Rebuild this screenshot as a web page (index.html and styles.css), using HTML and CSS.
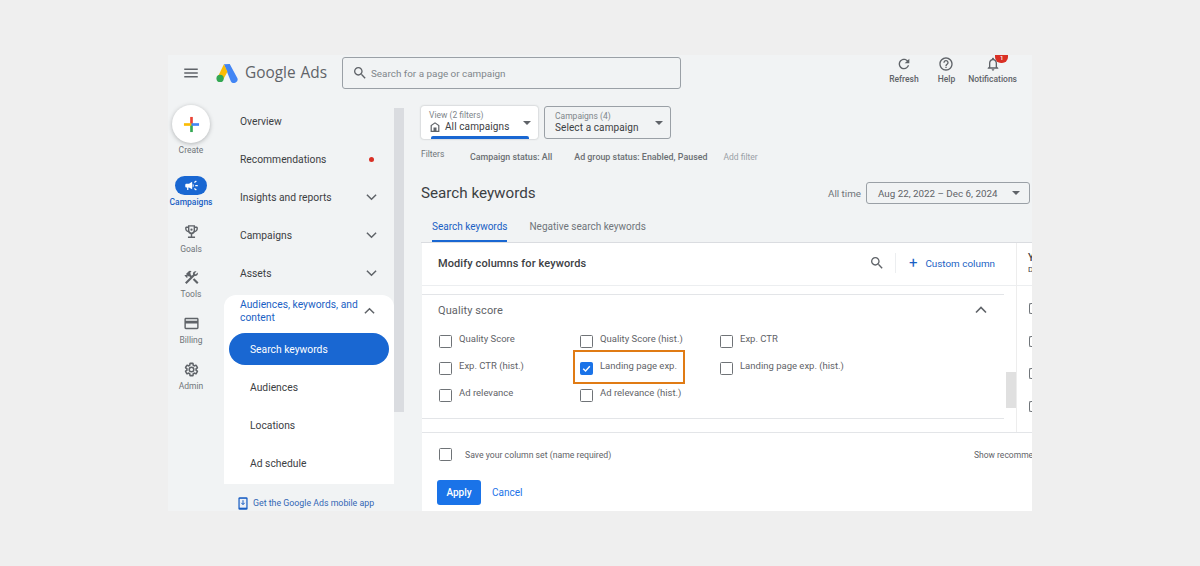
FILE: index.html
```html
<!DOCTYPE html>
<html lang="en">
<head>
    <meta charset="UTF-8">
    <title>Google Ads - Search keywords</title>
    <link rel="stylesheet" href="styles.css">
</head>
<body>
    <div class="app">
        <div class="topbar">
            <svg class="menu-icon" viewBox="0 0 24 24"><path d="M3 18h18v-2H3v2zm0-5h18v-2H3v2zm0-7v2h18V6H3z"/></svg>
            <svg class="logo" viewBox="0 0 24 22">
                <path d="M8.6 1.5 L15 1 L23 16 A3.9 3.9 0 0 1 16.2 20 Z" fill="#4285f4"/>
                <path d="M8.6 1.5 L12.5 9.5 L8 18 L2.5 14 Z" fill="#fbbc04"/>
                <circle cx="4.4" cy="17" r="4" fill="#34a853"/>
            </svg>
            <div class="brand"><span>Google</span> <span class="brand-ads">Ads</span></div>
            <div class="search-box">
                <svg class="search-icon" viewBox="0 0 24 24"><path d="M15.5 14h-.79l-.28-.27C15.41 12.59 16 11.11 16 9.5 16 5.91 13.09 3 9.5 3S3 5.91 3 9.5 5.91 16 9.5 16c1.61 0 3.09-.59 4.23-1.57l.27.28v.79l5 4.99L20.49 19l-4.99-5zm-6 0C7.01 14 5 11.99 5 9.5S7.01 5 9.5 5 14 7.01 14 9.5 11.99 14 9.5 14z"/></svg>
                <span>Search for a page or campaign</span>
            </div>
            <div class="top-actions">
                <div class="top-action refresh">
                    <svg viewBox="0 0 24 24"><path d="M17.65 6.35C16.2 4.9 14.21 4 12 4c-4.42 0-7.99 3.58-7.99 8s3.57 8 7.99 8c3.73 0 6.84-2.55 7.73-6h-2.08c-.82 2.33-3.04 4-5.65 4-3.31 0-6-2.69-6-6s2.69-6 6-6c1.66 0 3.14.69 4.22 1.78L13 11h7V4l-2.35 2.35z"/></svg>
                    <span>Refresh</span>
                </div>
                <div class="top-action help">
                    <svg viewBox="0 0 24 24"><path d="M11 18h2v-2h-2v2zm1-16C6.48 2 2 6.48 2 12s4.48 10 10 10 10-4.48 10-10S17.52 2 12 2zm0 18c-4.41 0-8-3.59-8-8s3.59-8 8-8 8 3.59 8 8-3.59 8-8 8zm0-14c-2.21 0-4 1.79-4 4h2c0-1.1.9-2 2-2s2 .9 2 2c0 2-3 1.75-3 5h2c0-2.25 3-2.5 3-5 0-2.21-1.79-4-4-4z"/></svg>
                    <span>Help</span>
                </div>
                <div class="top-action notify">
                    <svg viewBox="0 0 24 24"><path d="M12 22c1.1 0 2-.9 2-2h-4c0 1.1.9 2 2 2zm6-6v-5c0-3.07-1.63-5.64-4.5-6.32V4c0-.83-.67-1.5-1.5-1.5s-1.5.67-1.5 1.5v.68C7.64 5.36 6 7.92 6 11v5l-2 2v1h16v-1l-2-2zm-2 1H8v-6c0-2.48 1.51-4.5 4-4.5s4 2.02 4 4.5v6z"/></svg>
                    <i class="badge">1</i>
                    <span>Notifications</span>
                </div>
            </div>
        </div>

        <div class="workspace">
            <div class="rail">
                <div class="create-btn">
                    <svg viewBox="0 0 18 18">
                        <rect x="7.6" y="1" width="2.8" height="8" fill="#ea4335"/>
                        <rect x="7.6" y="9" width="2.8" height="8" fill="#34a853"/>
                        <rect x="1" y="7.6" width="8" height="2.8" fill="#fbbc04"/>
                        <rect x="9" y="7.6" width="8" height="2.8" fill="#4285f4"/>
                    </svg>
                </div>
                <div class="rail-label create-label">Create</div>
                <div class="rail-item active">
                    <div class="rail-pill"><svg viewBox="0 0 24 24"><path d="M18 11v2h4v-2h-4zm-2 6.61c.96.71 2.21 1.65 3.2 2.39.4-.53.8-1.07 1.2-1.6-.99-.74-2.24-1.68-3.2-2.4-.4.54-.8 1.08-1.2 1.61zM20.4 5.6c-.4-.53-.8-1.07-1.2-1.6-.99.74-2.24 1.68-3.2 2.4.4.53.8 1.07 1.2 1.6.96-.72 2.21-1.65 3.2-2.4zM4 9c-1.1 0-2 .9-2 2v2c0 1.1.9 2 2 2h1v4h2v-4h1l5 3V6L8 9H4zm11.5 3c0-1.33-.58-2.53-1.5-3.35v6.69c.92-.81 1.5-2.01 1.5-3.34z"/></svg></div>
                    <div class="rail-label">Campaigns</div>
                </div>
                <div class="rail-item goals">
                    <svg viewBox="0 0 24 24"><path fill-rule="evenodd" d="M19 5h-2V3H7v2H5c-1.1 0-2 .9-2 2v1c0 2.55 1.92 4.63 4.39 4.94.63 1.5 1.98 2.63 3.61 2.96V19H7v2h10v-2h-4v-3.1c1.63-.33 2.98-1.46 3.61-2.96C19.08 12.63 21 10.55 21 8V7c0-1.1-.9-2-2-2zM5 8V7h2v3.82C5.84 10.4 5 9.3 5 8zm14 0c0 1.3-.84 2.4-2 2.82V7h2v1zM9 5v5c0 1.7 1.3 3.5 3 3.5s3-1.8 3-3.5V5H9z"/><circle cx="12" cy="9.5" r="1.6"/></svg>
                    <div class="rail-label">Goals</div>
                </div>
                <div class="rail-item tools">
                    <svg viewBox="0 0 24 24"><path d="M13.78 15.3l6 6 2.11-2.16-6-6zM17.5 10c1.93 0 3.5-1.57 3.5-3.5 0-.58-.16-1.12-.41-1.6l-2.7 2.7-1.49-1.49 2.7-2.7c-.48-.25-1.02-.41-1.6-.41C15.57 3 14 4.57 14 6.5c0 .41.08.8.21 1.16l-1.85 1.85-1.78-1.78.71-.71-1.41-1.41L12 3.49c-1.17-1.17-3.07-1.17-4.24 0L4.22 7.03l1.41 1.41H2.81l-.71.71 3.54 3.54.71-.71V9.15l1.41 1.41.71-.71 1.78 1.78-7.41 7.41 2.12 2.12L16.34 9.79c.36.13.75.21 1.16.21z"/></svg>
                    <div class="rail-label">Tools</div>
                </div>
                <div class="rail-item billing">
                    <svg viewBox="0 0 24 24"><path d="M20 4H4c-1.11 0-1.99.89-1.99 2L2 18c0 1.11.89 2 2 2h16c1.11 0 2-.89 2-2V6c0-1.11-.89-2-2-2zm0 14H4v-6h16v6zm0-10H4V6h16v2z"/></svg>
                    <div class="rail-label">Billing</div>
                </div>
                <div class="rail-item admin">
                    <svg viewBox="0 0 24 24"><path d="M19.14 12.94c.04-.3.06-.61.06-.94 0-.32-.02-.64-.07-.94l2.03-1.58c.18-.14.23-.41.12-.61l-1.92-3.32c-.12-.22-.37-.29-.59-.22l-2.39.96c-.5-.38-1.03-.7-1.62-.94l-.36-2.54c-.04-.24-.24-.41-.48-.41h-3.84c-.24 0-.43.17-.47.41l-.36 2.54c-.59.24-1.13.57-1.62.94l-2.39-.96c-.22-.08-.47 0-.59.22L2.74 8.87c-.12.21-.08.47.12.61l2.03 1.58c-.05.3-.09.63-.09.94s.02.64.07.94l-2.03 1.58c-.18.14-.23.41-.12.61l1.92 3.32c.12.22.37.29.59.22l2.39-.96c.5.38 1.03.7 1.62.94l.36 2.54c.05.24.24.41.48.41h3.84c.24 0 .44-.17.47-.41l.36-2.54c.59-.24 1.13-.56 1.62-.94l2.39.96c.22.08.47 0 .59-.22l1.92-3.32c.12-.22.07-.47-.12-.61l-2.01-1.58zM12 15.6c-1.98 0-3.6-1.62-3.6-3.6s1.62-3.6 3.6-3.6 3.6 1.62 3.6 3.6-1.62 3.6-3.6 3.6z" fill="none" stroke="#5f6368" stroke-width="2.4" transform="translate(1.2 1.2) scale(.9)"/></svg>
                    <div class="rail-label">Admin</div>
                </div>
            </div>

            <div class="sidenav">
                <div class="nav-scroll">
                    <div class="nav-list">
                        <div class="nav-item">Overview</div>
                        <div class="nav-item">Recommendations<i class="red-dot"></i></div>
                        <div class="nav-item">Insights and reports<svg class="chev" viewBox="0 0 12 8"><path d="M1 1.5l5 5 5-5"/></svg></div>
                        <div class="nav-item">Campaigns<svg class="chev" viewBox="0 0 12 8"><path d="M1 1.5l5 5 5-5"/></svg></div>
                        <div class="nav-item">Assets<svg class="chev" viewBox="0 0 12 8"><path d="M1 1.5l5 5 5-5"/></svg></div>
                        <div class="nav-group">
                            <div class="group-title">
                                <span>Audiences, keywords, and content</span>
                                <svg class="chev" viewBox="0 0 12 8"><path d="M1 6.5l5-5 5 5"/></svg>
                            </div>
                            <div class="sub-item selected">Search keywords</div>
                            <div class="sub-item">Audiences</div>
                            <div class="sub-item">Locations</div>
                            <div class="sub-item">Ad schedule</div>
                        </div>
                    </div>
                    <div class="nav-scrollbar"><div class="nav-thumb"></div></div>
                </div>
                <div class="mobile-link">
                    <svg viewBox="0 0 12 16"><rect x="0.5" y="0.5" width="11" height="15" rx="1.6" fill="#1a5fc4"/><rect x="2" y="2.4" width="8" height="10.6" fill="#eef1f6"/><path d="M6 4v5M4 7.2l2 2.2 2-2.2" stroke="#1a5fc4" stroke-width="1.2" fill="none"/></svg>
                    <span>Get the Google Ads mobile app</span>
                </div>
            </div>

            <div class="main">
                <div class="picker-row">
                    <div class="picker view-picker">
                        <div class="picker-text">
                            <div class="picker-label">View (2 filters)</div>
                            <div class="picker-value">
                                <svg viewBox="0 0 12 12"><path d="M6 1.2L1.6 4.2V11h8.8V4.2L6 1.2zM2.8 4.8L6 2.6l3.2 2.2v5H2.8v-5zM4.5 6.5h3v3.2h-3z"/></svg>
                                All campaigns
                            </div>
                        </div>
                        <i class="caret"></i>
                    </div>
                    <div class="picker camp-picker">
                        <div class="picker-text">
                            <div class="picker-label">Campaigns (4)</div>
                            <div class="picker-value">Select a campaign</div>
                        </div>
                        <i class="caret"></i>
                    </div>
                </div>

                <div class="filter-row">
                    <span class="filter-title">Filters</span>
                    <span class="filter-chip chip-status">Campaign status: All</span>
                    <span class="filter-chip">Ad group status: Enabled, Paused</span>
                    <span class="add-filter">Add filter</span>
                </div>

                <div class="title-row">
                    <h1>Search keywords</h1>
                    <div class="date-area">
                        <span class="date-label">All time</span>
                        <div class="date-box">Aug 22, 2022 – Dec 6, 2024<i class="caret"></i></div>
                    </div>
                </div>

                <div class="tabs">
                    <div class="tab active">Search keywords</div>
                    <div class="tab">Negative search keywords</div>
                </div>

                <div class="panel">
                    <div class="panel-main">
                        <div class="panel-head">
                            <span class="panel-title">Modify columns for keywords</span>
                            <svg class="panel-search" viewBox="0 0 24 24"><path d="M15.5 14h-.79l-.28-.27C15.41 12.59 16 11.11 16 9.5 16 5.91 13.09 3 9.5 3S3 5.91 3 9.5 5.91 16 9.5 16c1.61 0 3.09-.59 4.23-1.57l.27.28v.79l5 4.99L20.49 19l-4.99-5zm-6 0C7.01 14 5 11.99 5 9.5S7.01 5 9.5 5 14 7.01 14 9.5 11.99 14 9.5 14z"/></svg>
                            <span class="head-divider"></span>
                            <span class="custom-col"><b>+</b>Custom column</span>
                        </div>
                        <div class="panel-scroll">
                            <div class="section">
                                <div class="section-head">
                                    <span>Quality score</span>
                                    <svg class="chev" viewBox="0 0 12 8"><path d="M1 6.5l5-5 5 5"/></svg>
                                </div>
                                <div class="check-grid">
                                    <label class="check"><i class="box"></i>Quality Score</label>
                                    <label class="check"><i class="box"></i>Quality Score (hist.)</label>
                                    <label class="check"><i class="box"></i>Exp. CTR</label>
                                    <label class="check"><i class="box"></i>Exp. CTR (hist.)</label>
                                    <label class="check highlighted"><i class="box on"><svg viewBox="0 0 12 12"><path d="M2.4 6.2l2.6 2.6 4.6-5.2"/></svg></i>Landing page exp.</label>
                                    <label class="check"><i class="box"></i>Landing page exp. (hist.)</label>
                                    <label class="check"><i class="box"></i>Ad relevance</label>
                                    <label class="check"><i class="box"></i>Ad relevance (hist.)</label>
                                </div>
                            </div>
                            <div class="next-section">Auction insights</div>
                            <div class="scroll-thumb"></div>
                        </div>
                    </div>
                    <div class="side-col">
                        <div class="side-head"><b>Y</b><small>D</small></div>
                        <div class="side-marks"><i></i><i></i><i></i><i></i></div>
                    </div>
                </div>
                <div class="panel-foot">
                    <div class="save-row">
                        <label class="check save-check"><i class="box"></i>Save your column set (name required)</label>
                        <span class="show-rec">Show recommended columns</span>
                    </div>
                    <div class="btn-row">
                        <button class="apply-btn">Apply</button>
                        <span class="cancel-btn">Cancel</span>
                    </div>
                </div>
            </div>
        </div>
    </div>
</body>
</html>
```

FILE: styles.css
```css
*,
*::after {
    box-sizing: border-box;
}

body {
    margin: 0;
    padding: 55px 168px;
    background: #efefef;
    font-family: Roboto, "Liberation Sans", sans-serif;
    color: #3c4043;
}

.app {
    width: 864px;
    height: 456px;
    background: #f1f3f4;
    overflow: hidden;
}

/* top bar */
.topbar {
    display: flex;
    align-items: flex-start;
    height: 50px;
}

.menu-icon {
    width: 18px;
    height: 18px;
    margin: 9px 0 0 14px;
    fill: #5f6368;
}

.logo {
    width: 22px;
    height: 20px;
    margin: 8px 0 0 16px;
}

.brand {
    margin: 6px 0 0 7px;
    width: 97px;
    font-family: "Open Sans", sans-serif;
    font-size: 15.4px;
    line-height: 24px;
    color: #5f6368;
    white-space: nowrap;
}

.brand-ads {
    margin-left: 1px;
}

.search-box {
    display: flex;
    align-items: center;
    width: 339px;
    height: 32px;
    margin-top: 2px;
    padding-left: 9px;
    border: 1px solid #9aa0a6;
    border-radius: 3px;
    font-size: 9.9px;
    color: #80868b;
}

.search-icon {
    width: 16px;
    height: 16px;
    margin-right: 3px;
    fill: #5f6368;
}

.top-actions {
    display: flex;
    margin-left: auto;
    padding-right: 15px;
}

.top-action {
    position: relative;
    display: flex;
    flex-direction: column;
    align-items: center;
    font-size: 8.5px;
    font-weight: 500;
    line-height: 10px;
    color: #5f6368;
}

.top-action svg {
    width: 16px;
    height: 16px;
    margin: 1px 0 2px;
    fill: #5f6368;
}

.top-action.refresh {
    margin-right: 19px;
}

.top-action.help {
    margin-right: 13px;
}

.badge {
    position: absolute;
    top: -1px;
    left: 27px;
    width: 13px;
    height: 9px;
    border-radius: 0 0 6px 6px;
    background: #d93025;
    color: #fff;
    font-size: 6px;
    font-style: normal;
    line-height: 7px;
    text-align: center;
}

.workspace {
    display: flex;
}

/* icon rail */
.rail {
    width: 46px;
    display: flex;
    flex-direction: column;
    align-items: center;
}

.create-btn {
    display: flex;
    align-items: center;
    justify-content: center;
    width: 38px;
    height: 38px;
    border-radius: 50%;
    background: #fff;
    box-shadow: 0 1px 4px rgba(60, 64, 67, 0.35);
}

.create-btn svg {
    width: 17px;
    height: 17px;
}

.rail-label {
    font-size: 8.5px;
    line-height: 10px;
    color: #70757a;
    white-space: nowrap;
}

.create-label {
    margin: 2px 0 21px;
}

.rail-item {
    display: flex;
    flex-direction: column;
    align-items: center;
    height: 46px;
}

.rail-item svg {
    width: 17px;
    height: 17px;
    fill: #5f6368;
}

.rail-item.active {
    height: 39px;
    margin-bottom: 8px;
}

.rail-pill {
    display: flex;
    align-items: center;
    justify-content: center;
    width: 32px;
    height: 19px;
    border-radius: 10px;
    background: #1967d2;
}

.rail-pill svg {
    width: 15px;
    height: 15px;
    fill: #fff;
}

.rail-item .rail-label {
    margin-top: 3px;
}

.rail-item.goals .rail-label {
    margin-top: 4px;
}

.rail-item.active .rail-label {
    margin-top: 2px;
    color: #1a5fc4;
    font-weight: 500;
}

/* side navigation */
.sidenav {
    width: 180px;
    margin-left: 10px;
}

.nav-scroll {
    display: flex;
    height: 386px;
    margin-top: -3px;
    overflow: hidden;
}

.nav-list {
    width: 170px;
}

.nav-item {
    display: flex;
    align-items: center;
    justify-content: space-between;
    height: 38px;
    padding: 0 17px 0 16px;
    font-size: 10.3px;
    color: #3c4043;
}

.chev {
    width: 11px;
    height: 8px;
    flex: none;
    fill: none;
    stroke: #5f6368;
    stroke-width: 1.6;
}

.red-dot {
    width: 5px;
    height: 5px;
    margin-right: 3px;
    border-radius: 50%;
    background: #d93025;
}

.nav-group {
    height: 189px;
    margin-top: 3px;
    padding-top: 1px;
    background: #fff;
    border-radius: 12px 12px 0 0;
}

.group-title {
    display: flex;
    align-items: center;
    justify-content: space-between;
    height: 33px;
    padding: 0 19px 4px 16px;
    font-size: 10.3px;
    line-height: 13px;
    color: #1a5fc4;
}

.group-title span {
    width: 124px;
}

.sub-item {
    display: flex;
    align-items: center;
    height: 38px;
    padding-left: 26px;
    font-size: 10.3px;
    color: #3c4043;
}

.sub-item.selected {
    width: 160px;
    height: 32px;
    margin: 4px 0 3px 5px;
    padding-left: 21px;
    border-radius: 16px;
    background: #1967d2;
    color: #fff;
}

.nav-scrollbar {
    width: 10px;
    padding-top: 6px;
}

.nav-thumb {
    height: 304px;
    background: #dadce0;
}

.mobile-link {
    display: flex;
    align-items: center;
    gap: 5px;
    height: 30px;
    padding-left: 14px;
    font-size: 8.8px;
    color: #3367b5;
}

.mobile-link svg {
    width: 10px;
    height: 15px;
}

/* main column */
.main {
    width: 611px;
    margin-left: 17px;
    margin-top: 1px;
}

.picker-row {
    display: flex;
    gap: 6px;
}

.picker {
    display: flex;
    align-items: center;
    justify-content: space-between;
    height: 33px;
    padding: 0 7px 0 8px;
    border-radius: 3px;
}

.view-picker {
    position: relative;
    width: 117px;
    background: #fff;
    box-shadow: 0 0 2px rgba(60, 64, 67, 0.4);
}

.view-picker::after {
    content: "";
    position: absolute;
    left: 10px;
    bottom: 0;
    width: 98px;
    height: 3px;
    background: #1967d2;
    border-radius: 2px 2px 0 0;
}

.camp-picker {
    width: 127px;
    padding-left: 10px;
    border: 1px solid #9aa0a6;
}

.picker-label {
    font-size: 8.5px;
    line-height: 11px;
    color: #80868b;
}

.picker-value {
    display: flex;
    align-items: center;
    gap: 4px;
    font-size: 10px;
    line-height: 12px;
    color: #3c4043;
    letter-spacing: 0.1px;
}

.view-picker .picker-text {
    margin-top: -2px;
}

.picker-value svg {
    width: 12px;
    height: 12px;
    fill: #5f6368;
}

.caret {
    width: 0;
    height: 0;
    border-left: 4px solid transparent;
    border-right: 4px solid transparent;
    border-top: 4px solid #5f6368;
}

.filter-row {
    display: flex;
    align-items: center;
    height: 24px;
    margin-top: 6px;
    font-size: 8.5px;
    color: #70757a;
}

.filter-title {
    width: 49px;
    margin-top: -6px;
}

.filter-chip {
    padding-right: 22px;
    font-weight: 500;
    font-size: 8.9px;
    color: #6b6f73;
    white-space: nowrap;
}

.add-filter {
    margin-left: -6px;
    color: #9aa0a6;
}

.title-row {
    display: flex;
    align-items: center;
    justify-content: space-between;
    height: 26px;
    margin-top: 11px;
    padding-right: 2px;
}

h1 {
    margin: 0;
    font-size: 15.2px;
    font-weight: 400;
    color: #3c4043;
}

.date-area {
    display: flex;
    align-items: center;
    gap: 5px;
    font-size: 9.8px;
    color: #70757a;
}

.date-box {
    display: flex;
    align-items: center;
    justify-content: space-between;
    width: 164px;
    height: 22px;
    padding: 0 9px 0 11px;
    border: 1px solid #9aa0a6;
    border-radius: 3px;
    font-size: 9.8px;
    color: #5f6368;
}

.tabs {
    display: flex;
    height: 33px;
    margin-top: 4px;
    border-bottom: 1px solid #dadce0;
    font-size: 10px;
    color: #70757a;
}

.tab {
    padding: 11px 0 0;
    margin-left: 11px;
    margin-right: 11px;
}

.tab.active {
    color: #1a5fc4;
    box-shadow: inset 0 -2px 0 #1967d2;
}

/* modify columns panel */
.panel {
    display: flex;
    height: 189px;
    background: #fff;
    margin-left: 1px;
}

.panel-main {
    flex: none;
    width: 595px;
    border-right: 1px solid #ededed;
}

.panel-head {
    display: flex;
    align-items: center;
    height: 43px;
    padding: 0 21px 2px 16px;
    border-bottom: 1px solid #eceef0;
}

.panel-title {
    flex: 1;
    font-size: 11px;
    font-weight: 500;
    letter-spacing: 0.1px;
    color: #3c4043;
}

.panel-search {
    width: 16px;
    height: 16px;
    fill: #5f6368;
}

.head-divider {
    width: 1px;
    height: 20px;
    margin: 0 13px 0 10px;
    background: #eceef0;
}

.custom-col {
    font-size: 9.9px;
    color: #1a5fc4;
}

.custom-col b {
    margin-right: 8px;
    font-size: 15px;
    font-weight: 400;
    vertical-align: -1px;
}

.panel-scroll {
    position: relative;
    height: 145px;
    padding-top: 8px;
    overflow: hidden;
}

.section {
    width: 582px;
    height: 125px;
    border-top: 1px solid #e3e5e8;
    border-bottom: 1px solid #e3e5e8;
}

.section-head {
    display: flex;
    align-items: center;
    justify-content: space-between;
    height: 30px;
    padding: 0 17px 0 16px;
    font-size: 11px;
    color: #5f6368;
    letter-spacing: 0.1px;
}

.section-head .chev {
    width: 12px;
}

.check-grid {
    display: grid;
    grid-template-columns: 141px 140px 1fr;
    grid-auto-rows: 27px;
    padding: 0 0 0 17px;
}

.check {
    position: relative;
    display: flex;
    align-items: center;
    gap: 7px;
    font-size: 9.5px;
    color: #5f6368;
    white-space: nowrap;
}

.box {
    flex: none;
    display: flex;
    align-items: center;
    justify-content: center;
    width: 13px;
    height: 13px;
    margin-top: 5px;
    border: 1.5px solid #6f7377;
    border-radius: 1.5px;
}

.box.on {
    border-color: #1a73e8;
    background: #1a73e8;
}

.box svg {
    width: 11px;
    height: 11px;
    fill: none;
    stroke: #fff;
    stroke-width: 1.5;
}

.highlighted::after {
    content: "";
    position: absolute;
    left: -7px;
    top: -2px;
    width: 112px;
    height: 34px;
    border: 2px solid #e07b14;
}

.next-section {
    padding: 11px 0 0 16px;
    font-size: 11px;
    color: #5f6368;
}

.scroll-thumb {
    position: absolute;
    right: 0;
    top: 86px;
    width: 10px;
    height: 36px;
    background: #e0e0e0;
}

.side-col {
    flex: 1;
    min-width: 0;
    overflow: hidden;
}

.side-head {
    height: 43px;
    padding: 9px 0 0 11px;
    font-size: 10px;
    line-height: 12px;
    border-bottom: 1px solid #eceef0;
}

.side-head b {
    display: block;
    font-weight: 500;
    color: #3c4043;
}

.side-head small {
    display: block;
    font-size: 8px;
}

.side-marks {
    padding: 17px 0 0 12px;
}

.side-marks i {
    display: block;
    width: 6px;
    height: 11px;
    margin-bottom: 21.5px;
    border: 1px solid #70757a;
    border-right: none;
    border-radius: 2px 0 0 2px;
}

.panel-foot {
    height: 80px;
    margin-left: 1px;
    background: #fff;
    border-top: 1px solid #e3e5e8;
    overflow: hidden;
}

.save-row {
    display: flex;
    align-items: center;
    justify-content: space-between;
    height: 43px;
    padding-left: 17px;
    white-space: nowrap;
}

.save-check {
    gap: 13px;
    font-size: 8.7px;
    color: #5f6368;
}

.save-check .box {
    margin-top: 0;
}

.show-rec {
    flex: none;
    width: 58px;
    overflow: hidden;
    font-size: 8.5px;
    color: #5f6368;
}

.btn-row {
    display: flex;
    align-items: center;
    gap: 11px;
    padding: 4px 0 0 15px;
}

.apply-btn {
    width: 44px;
    height: 25px;
    padding: 0;
    border: none;
    border-radius: 3px;
    background: #1a73e8;
    color: #fff;
    font-family: inherit;
    font-size: 10px;
    font-weight: 500;
}

.cancel-btn {
    font-size: 10px;
    color: #1a73e8;
}
```
